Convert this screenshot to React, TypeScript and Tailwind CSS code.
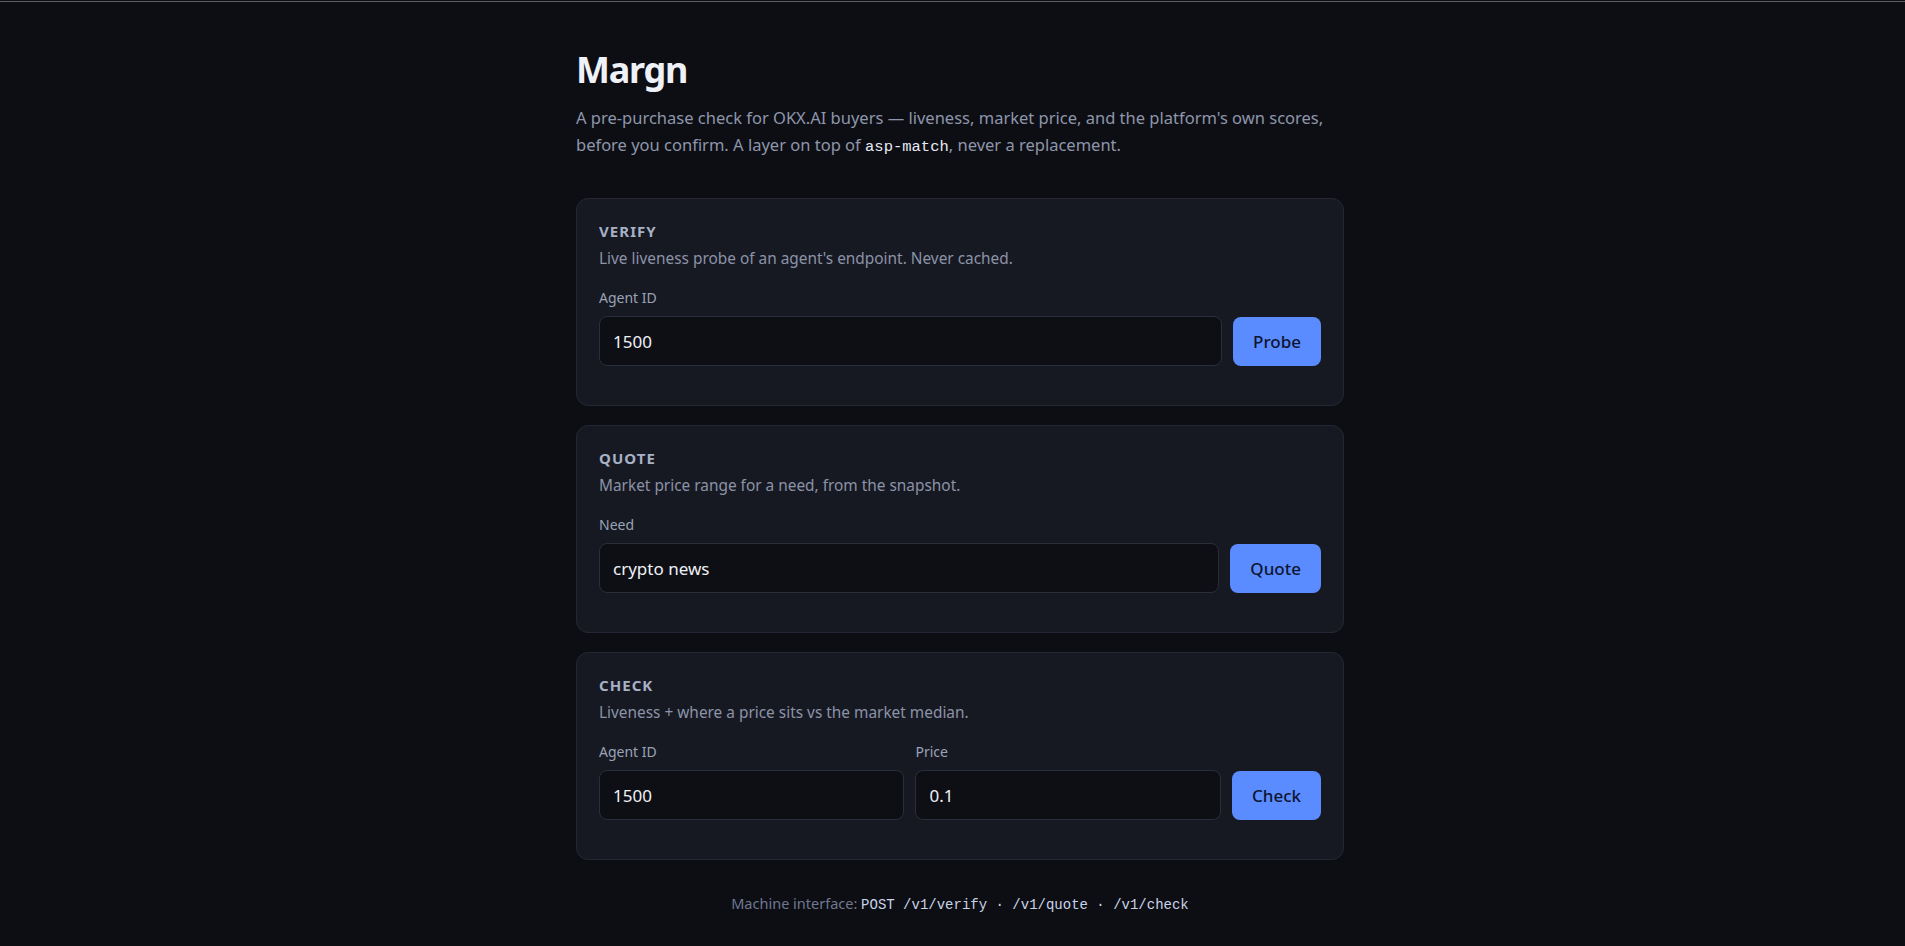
import React from "react";

function Field({ label, value }: { label: string; value: string }) {
  return (
    <label className="flex min-w-0 flex-1 flex-col">
      <span className="mb-2 text-[14px] leading-5 text-[#9aa3b6]">{label}</span>
      <input
        defaultValue={value}
        className="h-[50px] w-full rounded-[8px] border border-[#2a2e3b] bg-[#0e0f14] px-[13px] text-[17px] text-[#eef1f7] outline-none"
      />
    </label>
  );
}

function Card({
  title,
  desc,
  button,
  fields,
}: {
  title: string;
  desc: string;
  button: string;
  fields: { label: string; value: string }[];
}) {
  return (
    <section className="rounded-[12px] border border-[#242733] bg-[#171922] px-[22px] pb-[39px] pt-[22px]">
      <h2 className="text-[15px] font-bold uppercase leading-5 tracking-[0.07em] text-[#a7b1c6]">
        {title}
      </h2>
      <p className="mt-[7px] text-[15.4px] leading-[22px] text-[#8b93a8]">{desc}</p>
      <div className="mt-[18px] flex items-end gap-[11px]">
        {fields.map((f) => (
          <Field key={f.label} label={f.label} value={f.value} />
        ))}
        <button className="h-[49px] shrink-0 rounded-[8px] bg-[#5b8cff] px-5 text-[17px] font-medium text-[#0d1431]">
          {button}
        </button>
      </div>
    </section>
  );
}

export default function App() {
  return (
    <div
      className="min-h-screen bg-[#0d0e13] pb-10 pl-[15px]"
      style={{ fontFamily: '"Noto Sans", "Open Sans", sans-serif' }}
    >
      <div className="-ml-[15px] h-px" />
      <div className="-ml-[15px] h-px bg-[#5c5d61]" />
      <main className="mx-auto w-[768px] pt-[46px]">
        <h1 className="text-[36px] font-bold leading-[44px] tracking-[-0.035em] text-[#eef1f8]">
          Margn
        </h1>
        <p className="mt-3 text-[16.5px] leading-[27px] text-[#8e96ab]">
          A pre-purchase check for OKX.AI buyers — liveness, market price, and the platform's own
          scores, before you confirm. A layer on top of{" "}
          <code className="font-['Liberation_Mono',monospace] text-[15.5px] text-[#e6ebf5]">
            asp-match
          </code>
          , never a replacement.
        </p>

        <div className="mt-[37px] flex flex-col gap-[19px]">
          <Card
            title="Verify"
            desc="Live liveness probe of an agent's endpoint. Never cached."
            button="Probe"
            fields={[{ label: "Agent ID", value: "1500" }]}
          />
          <Card
            title="Quote"
            desc="Market price range for a need, from the snapshot."
            button="Quote"
            fields={[{ label: "Need", value: "crypto news" }]}
          />
          <Card
            title="Check"
            desc="Liveness + where a price sits vs the market median."
            button="Check"
            fields={[
              { label: "Agent ID", value: "1500" },
              { label: "Price", value: "0.1" },
            ]}
          />
        </div>

        <p className="mt-[33px] text-center text-[14.5px] leading-5 text-[#6f7890]">
          Machine interface:{" "}
          <code className="font-['Liberation_Mono',monospace] text-[14px] text-[#c9d3e8]">
            POST /v1/verify · /v1/quote · /v1/check
          </code>
        </p>
      </main>
    </div>
  );
}
